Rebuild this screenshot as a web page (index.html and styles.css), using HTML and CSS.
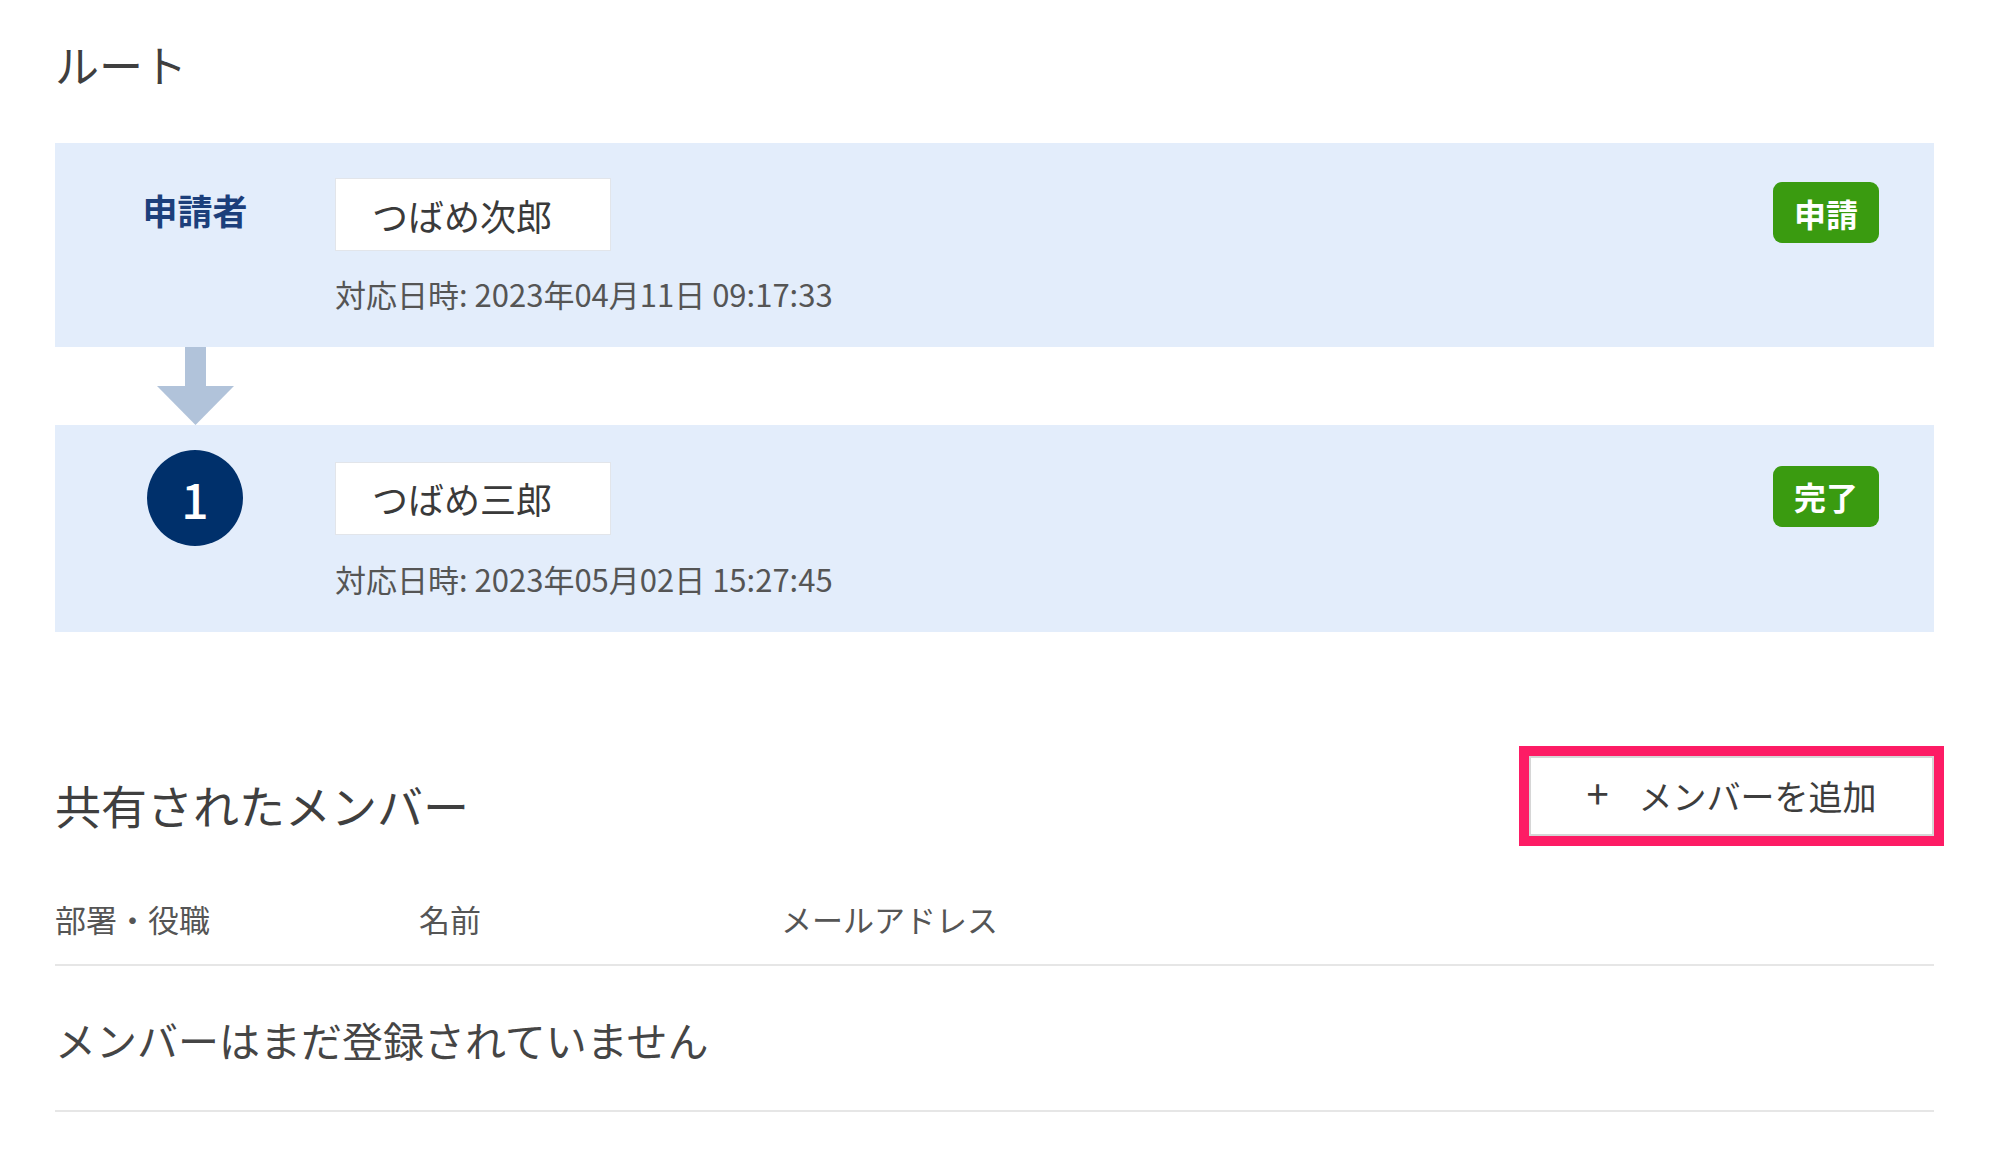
FILE: index.html
```html
<!DOCTYPE html>
<html lang="ja">
<head>
<meta charset="utf-8">
<title>ルート</title>
<link rel="stylesheet" href="styles.css">
</head>
<body>
<main class="page">
  <h2 class="section-title route-title">ルート</h2>

  <section class="route">
    <div class="step">
      <div class="step-left"><span class="step-label">申請者</span></div>
      <div class="step-name">つばめ次郎</div>
      <div class="step-badge"><span class="badge">申請</span></div>
      <div class="step-date">対応日時: 2023年04月11日 09:17:33</div>
    </div>

    <div class="connector">
      <svg class="arrow" width="77" height="78" viewBox="0 0 77 78" aria-hidden="true">
        <rect x="28" y="0" width="21" height="40" fill="#b1c3da"/>
        <polygon points="0,39 77,39 38.5,78" fill="#b1c3da"/>
      </svg>
    </div>

    <div class="step">
      <div class="step-left"><span class="step-num">1</span></div>
      <div class="step-name">つばめ三郎</div>
      <div class="step-badge"><span class="badge">完了</span></div>
      <div class="step-date">対応日時: 2023年05月02日 15:27:45</div>
    </div>
  </section>

  <section class="members">
    <div class="members-head">
      <h2 class="section-title members-title">共有されたメンバー</h2>
      <button class="add-btn" type="button"><span class="plus">+</span><span>メンバーを追加</span></button>
    </div>
    <div class="table-head">
      <span>部署・役職</span>
      <span>名前</span>
      <span>メールアドレス</span>
    </div>
    <div class="table-empty">メンバーはまだ登録されていません</div>
  </section>
</main>
</body>
</html>
```

FILE: styles.css
```css
* { box-sizing: border-box; }

html, body {
  margin: 0;
  padding: 0;
  background: #ffffff;
}

body {
  font-family: "Noto Sans CJK JP", "Noto Sans", "Liberation Sans", sans-serif;
  color: #3d3d3d;
}

.page {
  padding: 38px 65px 0 55px;
}

.section-title {
  margin: 0;
  font-size: 44px;
  font-weight: 400;
  line-height: 53px;
  color: #3f3f3f;
  letter-spacing: 0;
}

.route-title {
  margin-bottom: 52px;
}

.members-title {
  font-size: 46px;
  line-height: 55px;
  margin-bottom: 4px;
}

.route {
  display: flex;
  flex-direction: column;
}

.step {
  background: #e3edfb;
  display: grid;
  grid-template-columns: 280px 1fr auto;
  grid-template-rows: minmax(73px, auto) auto;
  row-gap: 23px;
  padding: 35px 55px 33px 0;
}

.step-left {
  display: flex;
  align-items: center;
  justify-content: center;
}

.step-label {
  font-size: 35px;
  font-weight: 700;
  color: #1c3f7b;
  line-height: 1;
  margin-bottom: 10px;
}

.step-num {
  width: 96px;
  height: 96px;
  margin: -10px 0;
  border-radius: 50%;
  background: #00306b;
  color: #ffffff;
  font-size: 48px;
  font-weight: 500;
  display: flex;
  align-items: center;
  justify-content: center;
  line-height: 1;
}

.step-name {
  justify-self: start;
  align-self: center;
  width: 276px;
  height: 73px;
  background: #ffffff;
  border: 1px solid #e2e5ea;
  padding: 0 36px;
  display: flex;
  align-items: center;
  font-size: 36px;
  color: #3a3a3a;
  line-height: 1;
}

.step-badge {
  display: flex;
  align-items: center;
}

.badge {
  display: inline-flex;
  align-items: center;
  justify-content: center;
  height: 61px;
  margin-bottom: 4px;
  padding: 0 21px;
  border-radius: 9px;
  background: #3a9b10;
  color: #ffffff;
  font-size: 32px;
  font-weight: 700;
  line-height: 1;
}

.step-date {
  grid-column: 2 / 4;
  font-size: 31px;
  line-height: 40px;
  color: #555555;
}

.connector {
  width: 280px;
  height: 78px;
  display: flex;
  justify-content: center;
}

.arrow {
  display: block;
}

.members {
  margin-top: 124px;
}

.members-head {
  display: flex;
  justify-content: space-between;
  align-items: flex-end;
}

.add-btn {
  width: 405px;
  height: 80px;
  display: flex;
  align-items: center;
  justify-content: center;
  gap: 30px;
  background: #ffffff;
  border: 2px solid #d6d6d6;
  outline: 10px solid #fd1c65;
  outline-offset: 0;
  font-family: inherit;
  font-size: 34px;
  color: #3d3d3d;
  padding: 0;
  cursor: pointer;
  line-height: 1;
}

.plus {
  font-size: 40px;
  font-weight: 400;
  line-height: 1;
  margin-top: -8px;
}

.table-head {
  margin-top: 65px;
  display: grid;
  grid-template-columns: 364px 362px 1fr;
  font-size: 31px;
  line-height: 36px;
  color: #555555;
  padding-bottom: 27px;
  border-bottom: 2px solid #e6e6e6;
}

.table-empty {
  font-size: 41px;
  line-height: 50px;
  color: #454545;
  padding: 48px 0 46px;
  border-bottom: 2px solid #e6e6e6;
}
```
